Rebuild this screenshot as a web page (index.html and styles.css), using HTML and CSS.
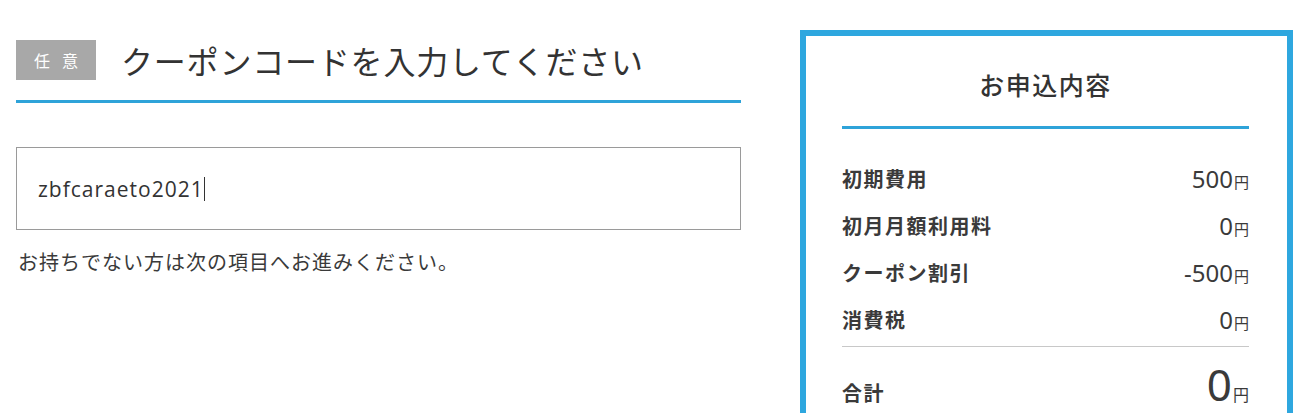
FILE: index.html
```html
<!DOCTYPE html>
<html lang="ja">
<head>
<meta charset="utf-8">
<link rel="stylesheet" href="styles.css">
</head>
<body>
<div class="page">
  <section class="coupon">
    <div class="coupon-head">
      <span class="badge">任意</span>
      <h2 class="coupon-title">クーポンコードを入力してください</h2>
    </div>
    <div class="coupon-input"><span class="coupon-value">zbfcaraeto2021</span><span class="caret"></span></div>
    <p class="coupon-note">お持ちでない方は次の項目へお進みください。</p>
  </section>
  <aside class="summary">
    <h3 class="summary-title">お申込内容</h3>
    <ul class="summary-list">
      <li class="row"><span class="label">初期費用</span><span class="price">500<small>円</small></span></li>
      <li class="row"><span class="label">初月月額利用料</span><span class="price">0<small>円</small></span></li>
      <li class="row"><span class="label">クーポン割引</span><span class="price">-500<small>円</small></span></li>
      <li class="row"><span class="label">消費税</span><span class="price">0<small>円</small></span></li>
    </ul>
    <div class="total"><span class="label">合計</span><span class="price big">0<small>円</small></span></div>
  </aside>
</div>
</body>
</html>
```

FILE: styles.css
```css
html, body {
  margin: 0;
  padding: 0;
  background: #fff;
  overflow: hidden;
}
body {
  font-family: "Noto Sans CJK JP", "Noto Sans", sans-serif;
  color: #3a3a3a;
}
.page {
  display: flex;
  align-items: flex-start;
  padding-left: 16px;
  gap: 59px;
}
.coupon {
  width: 725px;
  padding-top: 40px;
}
.coupon-head {
  display: flex;
  align-items: center;
  gap: 25px;
  padding-bottom: 20px;
  border-bottom: 3px solid #2ea3d9;
}
.badge {
  width: 80px;
  height: 40px;
  background: #a8a8a8;
  color: #fff;
  font-size: 16px;
  letter-spacing: 12px;
  padding-left: 12px;
  box-sizing: border-box;
  display: flex;
  align-items: center;
  justify-content: center;
}
.coupon-title {
  margin: 0;
  font-size: 32px;
  font-weight: 400;
  letter-spacing: 0.8px;
  line-height: 40px;
  color: #333;
}
.coupon-input {
  margin-top: 44px;
  height: 83px;
  box-sizing: border-box;
  border: 1px solid #9a9a9a;
  padding-left: 21px;
  display: flex;
  align-items: center;
  font-family: "Open Sans", "Noto Sans", sans-serif;
  font-size: 21px;
  letter-spacing: 1px;
  color: #333;
}
.caret {
  display: inline-block;
  width: 1px;
  height: 24px;
  background: #333;
}
.coupon-note {
  margin: 16px 0 0 2px;
  font-size: 20px;
  letter-spacing: 1px;
  line-height: 32px;
  color: #3a3a3a;
}
.summary {
  width: 493px;
  margin-top: 30px;
  height: 400px;
  box-sizing: border-box;
  border: 6px solid #2ea7df;
  border-bottom: 0;
  padding: 0 38px 0 36px;
}
.summary-title {
  margin: 0;
  padding-top: 32px;
  height: 93px;
  box-sizing: border-box;
  text-align: center;
  font-size: 25px;
  font-weight: 500;
  letter-spacing: 1.5px;
  line-height: 32px;
  border-bottom: 3px solid #2ea3d9;
  color: #333;
}
.summary-list {
  list-style: none;
  margin: 0;
  padding: 26px 0 3px;
  border-bottom: 1px solid #c8c8c8;
}
.row {
  display: flex;
  justify-content: space-between;
  align-items: center;
  height: 47px;
}
.label {
  font-size: 20px;
  font-weight: 700;
  letter-spacing: 1.5px;
  color: #3a3a3a;
}
.price {
  font-family: "Noto Sans", sans-serif;
  font-size: 24px;
  color: #3a3a3a;
  line-height: 1;
}
.price small {
  font-family: "Noto Sans CJK JP", sans-serif;
  font-size: 15px;
  margin-left: 1px;
}
.total {
  display: flex;
  justify-content: space-between;
  align-items: baseline;
  padding-top: 15px;
}
.total .label {
  line-height: 20px;
}
.price.big {
  font-size: 44px;
  line-height: 1;
}
.price.big small {
  font-size: 16px;
}
```
